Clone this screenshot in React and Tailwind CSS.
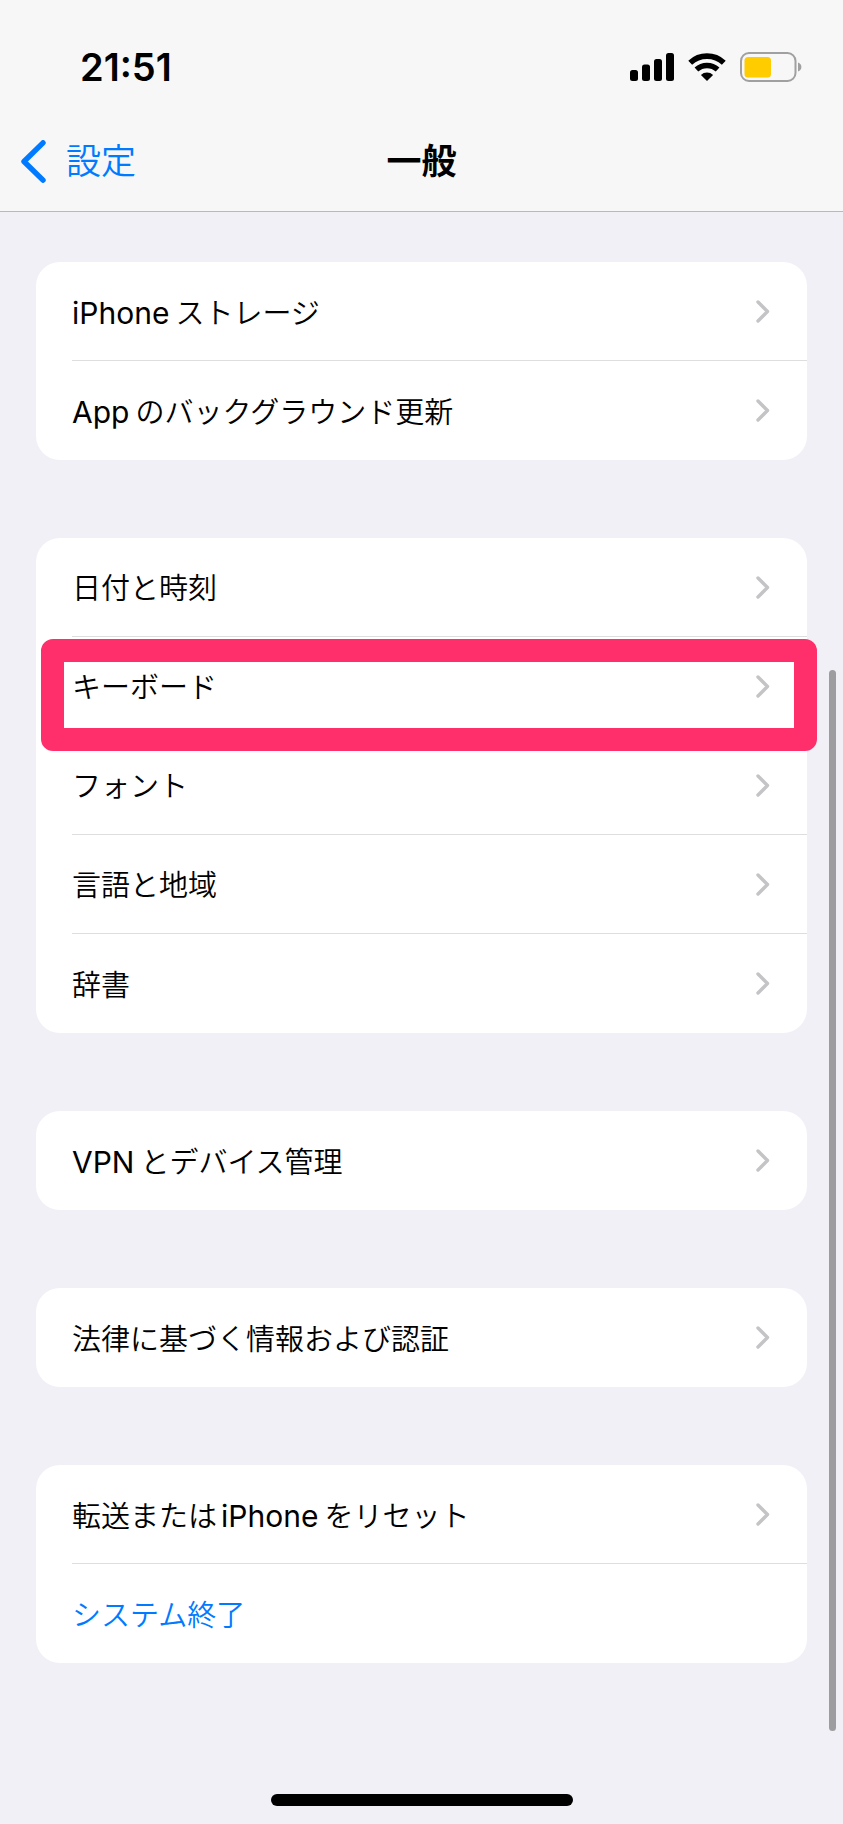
const groups = [
    [
        { latin: "iPhone", after: "ストレージ" },
        { latin: "App", after: "のバックグラウンド更新" },
    ],
    [
        { before: "日付と時刻" },
        { before: "キーボード", highlighted: true },
        { before: "フォント" },
        { before: "言語と地域" },
        { before: "辞書" },
    ],
    [{ latin: "VPN", after: "とデバイス管理" }],
    [{ before: "法律に基づく情報および認証" }],
    [
        { before: "転送または", latin: "iPhone", after: "をリセット" },
        { before: "システム終了", action: true },
    ],
];

function SignalIcon() {
    return (
        <svg width="44" height="30" viewBox="0 0 44 30" fill="#000" aria-hidden="true">
            <rect x="0" y="18" width="8" height="11" rx="2.5" />
            <rect x="12" y="12.5" width="8" height="16.5" rx="2.5" />
            <rect x="24" y="7" width="8" height="22" rx="2.5" />
            <rect x="36" y="1" width="8" height="28" rx="2.5" />
        </svg>
    );
}

function WifiIcon() {
    return (
        <svg width="38" height="30" viewBox="0 0 38 30" aria-hidden="true">
            <path d="M2.2 10.8 A24.5 24.5 0 0 1 35.8 10.8" fill="none" stroke="#000" strokeWidth="5.6" />
            <path d="M8.4 17.6 A15.6 15.6 0 0 1 29.6 17.6" fill="none" stroke="#000" strokeWidth="5.4" />
            <path d="M19 29 L12.9 22.9 A9 9 0 0 1 25.1 22.9 Z" fill="#000" />
        </svg>
    );
}

function BatteryIcon() {
    return (
        <svg width="62" height="30" viewBox="0 0 62 30" aria-hidden="true">
            <rect x="1" y="1" width="54.5" height="28" rx="8" fill="none" stroke="#a0a0a0" strokeWidth="2" />
            <rect x="4.5" y="5" width="26.5" height="20.5" rx="3.5" fill="#ffcc00" />
            <path d="M58 10.5 C62.5 12 62.5 18 58 19.5 Z" fill="#a0a0a0" />
        </svg>
    );
}

function Chevron() {
    return (
        <svg width="14" height="23" viewBox="0 0 14 23" fill="none" aria-hidden="true">
            <path d="M2 2 L11.5 11.5 L2 21" stroke="#c4c4c7" strokeWidth="3.4" strokeLinecap="round" strokeLinejoin="round" />
        </svg>
    );
}

function Row({ item, last }) {
    return (
        <li className="relative pl-9">
            <button
                type="button"
                className={`flex h-[99px] w-full items-center justify-between pr-[37px] text-left ${last ? "" : "border-b border-[#dedee0]"} ${item.action ? "text-[#007aff]" : "text-black"}`}
            >
                <span className="flex items-baseline pt-1">
                    {item.before && <span className="font-[350]">{item.before}</span>}
                    {item.latin && <span className={`text-[30px] mr-1.5 ${item.before ? "ml-1" : ""}`}>{item.latin}</span>}
                    {item.after && <span className="font-[350]">{item.after}</span>}
                </span>
                {!item.action && <Chevron />}
            </button>
            {item.highlighted && (
                <div className="pointer-events-none absolute top-[2px] -bottom-[15px] left-[5px] -right-[10px] z-10 rounded-xl border-[23px] border-[#ff2f6b]" />
            )}
        </li>
    );
}

export default function App() {
    return (
        <div className="relative min-h-screen bg-[#f1f0f6] font-['Inter','Noto_Sans_CJK_JP',sans-serif] text-[29px] text-black">
            <header className="border-b border-[#b9b9bd] bg-[#f7f7f7] pt-[45px]">
                <div className="flex h-11 items-center justify-between pl-20 pr-[41px]">
                    <time className="text-[38px] font-semibold">21:51</time>
                    <div className="flex items-center gap-[14px]">
                        <SignalIcon />
                        <WifiIcon />
                        <BatteryIcon />
                    </div>
                </div>
                <nav className="mt-[23px] grid h-[99px] grid-cols-3 items-center px-5 text-[35px]">
                    <a href="#settings" className="flex items-center gap-5 text-[#007aff]">
                        <svg width="26" height="43" viewBox="0 0 26 43" fill="none" aria-hidden="true">
                            <path d="M23 2.8 L4 21.5 L23 40.2" stroke="#007aff" strokeWidth="5.4" strokeLinecap="round" strokeLinejoin="round" />
                        </svg>
                        <span className="font-[350]">設定</span>
                    </a>
                    <h1 className="text-center font-bold">一般</h1>
                </nav>
            </header>

            <main className="flex flex-col gap-[78px] px-9 pt-[50px]">
                {groups.map((items, i) => (
                    <ul key={i} className="rounded-[24px] bg-white">
                        {items.map((item, j) => (
                            <Row key={j} item={item} last={j === items.length - 1} />
                        ))}
                    </ul>
                ))}
            </main>

            {/* Home indicator */}
            <div className="pt-[131px] pb-[18px]">
                <div className="mx-auto h-3 w-[302px] rounded-full bg-black" />
            </div>

            {/* Scroll indicator */}
            <div className="absolute top-[670px] bottom-[93px] right-[7px] w-[7px] rounded-full bg-[#9d9d9f]" />
        </div>
    );
}
